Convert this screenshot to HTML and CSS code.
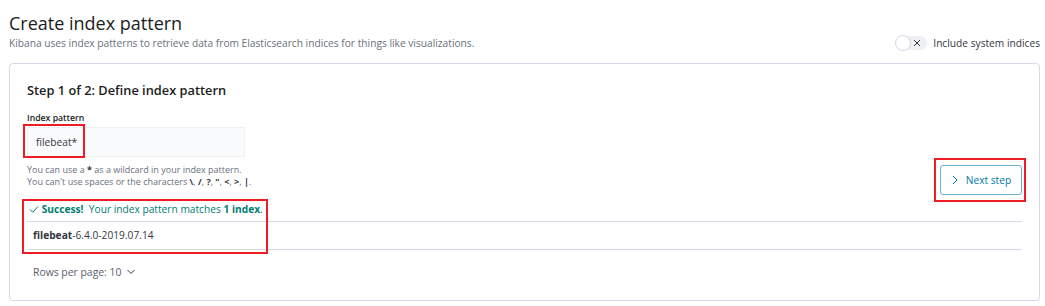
FILE: index.html
```html
<!DOCTYPE html>
<html lang="en">
<head>
    <meta charset="UTF-8">
    <title>Create index pattern</title>
    <link rel="stylesheet" href="styles.css">
</head>
<body>
    <div class="page">
        <div class="header">
            <div>
                <h1>Create index pattern</h1>
                <p class="subtitle">Kibana uses index patterns to retrieve data from Elasticsearch indices for things like visualizations.</p>
            </div>
            <label class="switch">
                <span class="switch-track">
                    <span class="switch-knob"></span>
                    <svg class="switch-x" width="8" height="8" viewBox="0 0 8 8"><path d="M1 1 L7 7 M7 1 L1 7" stroke="#343741" stroke-width="1" fill="none"/></svg>
                </span>
                <span class="switch-label">Include system indices</span>
            </label>
        </div>

        <div class="panel">
            <h2>Step 1 of 2: Define index pattern</h2>

            <div class="form-row">
                <div class="form-left">
                    <div class="field-label">Index pattern</div>
                    <div class="field">
                        <input type="text" value="filebeat*">
                        <span class="mark mark-input"></span>
                    </div>
                    <div class="help">
                        You can use a <b>*</b> as a wildcard in your index pattern.<br>
                        You can't use spaces or the characters <b>\</b>, <b>/</b>, <b>?</b>, <b>"</b>, <b>&lt;</b>, <b>&gt;</b>, <b>|</b>.
                    </div>
                </div>
                <div class="form-right">
                    <button class="next-btn">
                        <svg width="8" height="10" viewBox="0 0 8 10"><path d="M2 1 L6 5 L2 9" stroke="#0079a5" stroke-width="1" fill="none"/></svg>
                        Next step
                    </button>
                    <span class="mark mark-btn"></span>
                </div>
            </div>

            <div class="results">
                <div class="success"><svg width="10" height="9" viewBox="0 0 10 9"><path d="M1 4.5 L3.8 7.3 L9 1.5" stroke="#017d73" stroke-width="1" fill="none"/></svg> <b>Success!</b>&nbsp; Your index pattern matches <b>1 index</b>.</div>
                <div class="index-row"><b>filebeat</b>-6.4.0-2019.07.14</div>
                <span class="mark mark-results"></span>
            </div>

            <div class="pager">
                Rows per page: 10
                <svg width="10" height="8" viewBox="0 0 10 8"><path d="M1.5 2 L5 5.5 L8.5 2" stroke="#343741" stroke-width="1" fill="none"/></svg>
            </div>
        </div>
    </div>
</body>
</html>
```

FILE: styles.css
```css
body {
    margin: 0;
    font-family: 'Open Sans', sans-serif;
    color: #343741;
    background-color: #fff;
}

.page {
    padding: 11px 5px 0 9px;
}

.header {
    display: flex;
    justify-content: space-between;
    align-items: flex-end;
}

h1 {
    margin: 0;
    font-size: 18px;
    line-height: 25px;
    font-weight: 400;
    color: #1a1c21;
}

.subtitle {
    margin: 0;
    font-size: 10.2px;
    line-height: 14px;
    color: #69707d;
}

.switch {
    display: flex;
    align-items: center;
    gap: 6px;
}

.switch-track {
    position: relative;
    display: flex;
    align-items: center;
    justify-content: flex-end;
    width: 32px;
    height: 14px;
    border-radius: 7px;
    background-color: #eef0f3;
    padding-right: 6px;
    box-sizing: border-box;
}

.switch-knob {
    position: absolute;
    left: 0;
    top: -1px;
    width: 14px;
    height: 14px;
    border-radius: 50%;
    background-color: #fff;
    border: 1px solid #d3dae6;
}

.switch-label {
    font-size: 10.2px;
    line-height: 14px;
    color: #343741;
}

.panel {
    margin-top: 13px;
    height: 238px;
    box-sizing: border-box;
    border: 1px solid #d3dae6;
    border-radius: 4px;
    box-shadow: 0 2px 2px -1px rgba(152, 162, 179, 0.3);
    padding: 17px 17px 0 17px;
}

h2 {
    margin: 0;
    font-size: 12.8px;
    line-height: 18px;
    font-weight: 600;
    color: #1a1c21;
}

.form-row {
    display: flex;
    justify-content: space-between;
    align-items: flex-end;
    margin-top: 13px;
}

.field-label {
    font-size: 8.7px;
    font-weight: 600;
    line-height: 12px;
    color: #1a1c21;
}

.field {
    position: relative;
    margin-top: 3px;
}

.field input {
    display: block;
    width: 218px;
    height: 30px;
    box-sizing: border-box;
    border: none;
    background-color: #fafbfd;
    box-shadow: 0 1px 1px -1px rgba(152, 162, 179, 0.2), inset 0 0 0 1px rgba(0, 0, 0, 0.04);
    padding: 0 9px;
    font-family: 'Open Sans', sans-serif;
    font-size: 10.2px;
    color: #343741;
}

.help {
    margin-top: 7px;
    font-size: 9px;
    line-height: 12px;
    color: #69707d;
}

.help b {
    color: #343741;
}

.form-right {
    position: relative;
    margin-bottom: -7px;
}

.next-btn {
    display: flex;
    align-items: center;
    justify-content: center;
    gap: 7px;
    width: 82px;
    height: 30px;
    padding: 0;
    border: 1px solid #69b2d0;
    border-radius: 3px;
    background-color: #fff;
    color: #0079a5;
    font-family: 'Open Sans', sans-serif;
    font-size: 10.2px;
}

.results {
    position: relative;
    margin-top: 14px;
}

.success {
    font-size: 10.2px;
    line-height: 14px;
    color: #017d73;
    padding-left: 2px;
}

.success svg {
    vertical-align: -1px;
}

.index-row {
    margin-top: 5px;
    border-top: 1px solid #d3dae6;
    border-bottom: 1px solid #d3dae6;
    height: 27px;
    line-height: 27px;
    padding-left: 6px;
    font-size: 10.2px;
    color: #343741;
}

.pager {
    display: flex;
    align-items: center;
    gap: 5px;
    margin-top: 14px;
    padding-left: 6px;
    font-size: 10.4px;
    line-height: 16px;
    color: #5a606b;
}

/* red annotation boxes */
.mark {
    position: absolute;
    box-sizing: border-box;
    border: 2px solid #ee1c25;
    pointer-events: none;
}

.mark-input {
    left: -4px;
    top: -3px;
    width: 62px;
    height: 34px;
}

.mark-btn {
    left: -6px;
    top: -7px;
    width: 92px;
    height: 44px;
}

.mark-results {
    left: -5px;
    top: -3px;
    width: 246px;
    height: 55px;
}
```
